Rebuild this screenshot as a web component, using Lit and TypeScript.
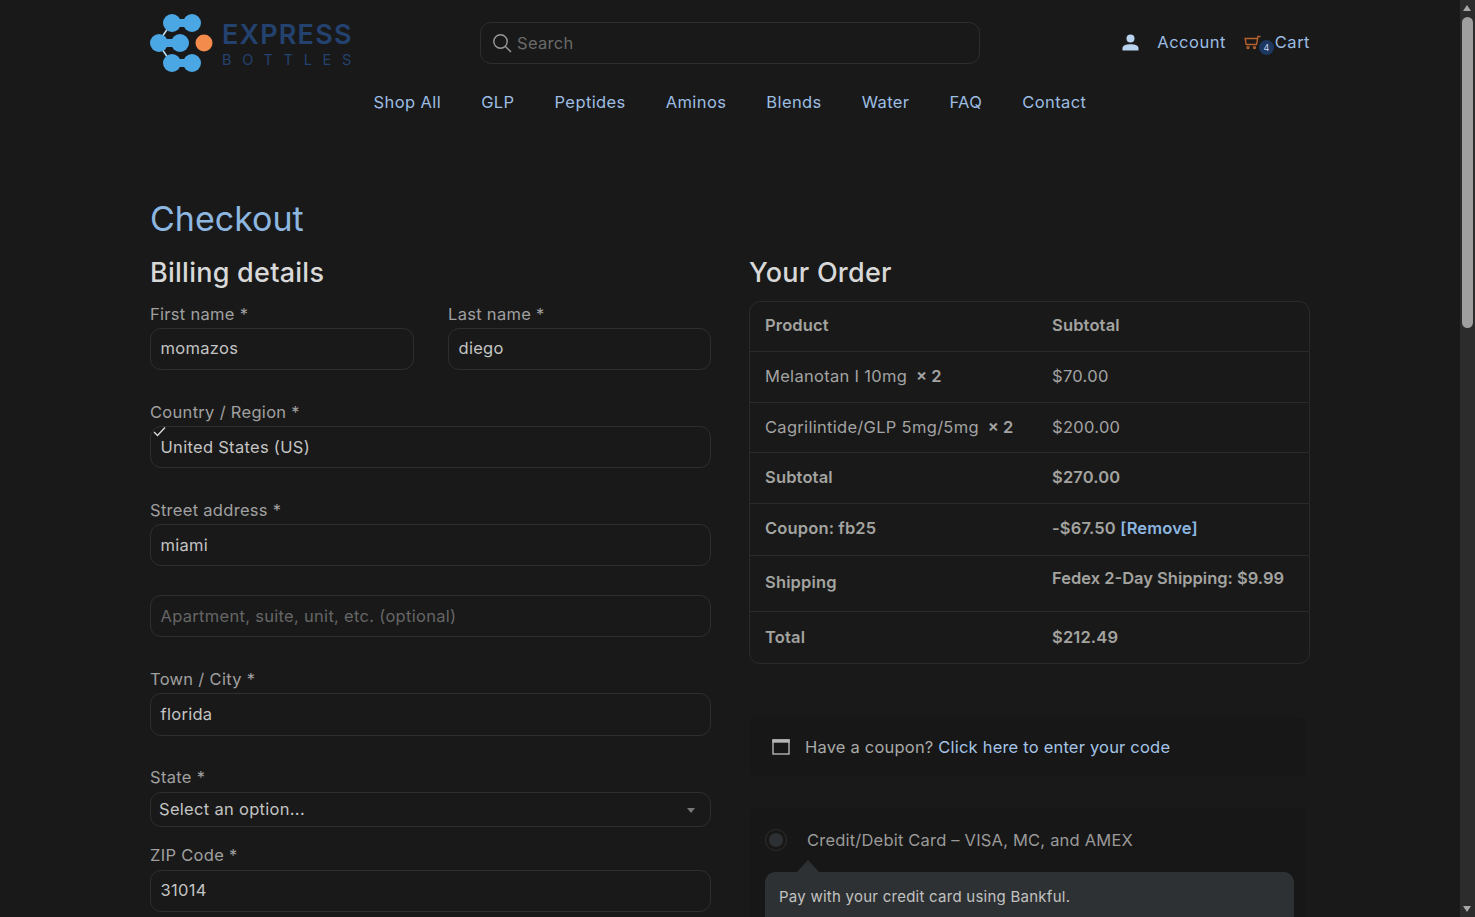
import { LitElement, html, css } from 'lit';
import { customElement } from 'lit/decorators.js';

const NAV = ['Shop All', 'GLP', 'Peptides', 'Aminos', 'Blends', 'Water', 'FAQ', 'Contact'];

const ROWS = [
  { label: 'Melanotan I 10mg', qty: '× 2', value: '$70.00', h: 51 },
  { label: 'Cagrilintide/GLP 5mg/5mg', qty: '× 2', value: '$200.00', h: 50 },
];

@customElement('app-root')
export class AppRoot extends LitElement {
  static styles = css`
    :host {
      display: block;
      height: 917px;
      overflow: hidden;
      position: relative;
      background: #191919;
      color: #a9a9a9;
      font-family: Inter, "Noto Sans", sans-serif;
      font-size: 16.5px;
      letter-spacing: 0.3px;
    }

    .page {
      width: 1160px;
      margin-left: 150px;
    }

    .top {
      display: flex;
      align-items: center;
      height: 85px;
    }

    .logo {
      display: flex;
      align-items: center;
      width: 330px;
      gap: 6px;
    }

    .logo-words {
      display: flex;
      flex-direction: column;
      color: #24426f;
      font-weight: 600;
    }

    .logo-main {
      font-size: 27px;
      line-height: 33px;
      letter-spacing: 1.2px;
    }

    .logo-sub {
      font-size: 14.5px;
      line-height: 17px;
      letter-spacing: 10.7px;
      font-weight: 400;
    }

    .search {
      display: flex;
      align-items: center;
      gap: 5px;
      box-sizing: border-box;
      width: 500px;
      height: 42px;
      padding-left: 11px;
      border: 1px solid #2e2e2e;
      border-radius: 11px;
      color: #6a6a6a;
      margin-top: 1px;
    }

    .actions {
      display: flex;
      align-items: center;
      margin-left: auto;
      margin-bottom: 1px;
      color: #9dbde2;
      letter-spacing: 0.5px;
    }

    .account {
      margin: 0 18px;
    }

    .cart-icon {
      position: relative;
      display: block;
      width: 31px;
      height: 24px;
      margin-top: 8px;
    }

    .badge {
      position: absolute;
      left: 15px;
      top: 6px;
      width: 15px;
      height: 15px;
      border-radius: 50%;
      background: #1d3760;
      color: #c8d8ee;
      font-size: 9px;
      line-height: 15px;
      text-align: center;
      letter-spacing: 0;
    }

    nav {
      display: flex;
      justify-content: center;
      gap: 40px;
      color: #9dbde2;
      line-height: 34px;
      letter-spacing: 0.4px;
    }

    h1 {
      margin: 79px 0 0;
      font-size: 34px;
      font-weight: 400;
      line-height: 42px;
      color: #8db6e0;
      letter-spacing: 0;
    }

    .columns {
      display: grid;
      grid-template-columns: 561px 561px;
      gap: 38px;
      margin-top: 17px;
    }

    h2 {
      margin: 0;
      font-size: 27px;
      font-weight: 500;
      line-height: 32px;
      color: #d8d8d8;
      letter-spacing: 0.25px;
    }

    .form {
      display: flex;
      flex-direction: column;
    }

    .pair {
      display: grid;
      grid-template-columns: 264px 263px;
      gap: 34px;
      margin-top: 18px;
    }

    .field {
      display: flex;
      flex-direction: column;
    }

    .spaced {
      margin-top: 35px;
    }

    .close {
      margin-top: 21px;
    }

    label {
      line-height: 14px;
      color: #a0a0a0;
    }

    .box {
      position: relative;
      display: flex;
      align-items: center;
      box-sizing: border-box;
      height: 42px;
      padding-left: 9.5px;
      margin-top: 7px;
      border: 1px solid #2e2e2e;
      border-radius: 11px;
      color: #c4c4c4;
    }

    .raised {
      padding-bottom: 2px;
    }

    .tall {
      height: 43px;
      padding-bottom: 1px;
    }

    .placeholder {
      color: #666;
      margin-top: 29px;
    }

    .check {
      position: absolute;
      left: 2px;
      top: -1px;
      width: 13px;
      height: 11px;
    }

    .select {
      height: 35px;
      padding-left: 8px;
      justify-content: space-between;
      padding-right: 15px;
      margin-top: 8px;
    }

    .zip {
      margin-top: 8px;
    }

    .caret {
      width: 0;
      height: 0;
      border-left: 4px solid transparent;
      border-right: 4px solid transparent;
      border-top: 5px solid #777;
      margin-top: 3px;
    }

    .order-table {
      margin-top: 12px;
      border: 1px solid #2a2a2a;
      border-radius: 11px;
    }

    .row {
      display: grid;
      grid-template-columns: 287px 1fr;
      align-items: center;
      box-sizing: border-box;
      padding: 0 0 2px 15px;
      border-bottom: 1px solid #2a2a2a;
      color: #a3a3a3;
    }

    .row.lift {
      padding-bottom: 4px;
    }

    .row:last-child {
      border-bottom: none;
    }

    .row.strong {
      font-weight: 600;
      color: #a3a3a0;
      letter-spacing: 0.15px;
    }

    .qty {
      font-weight: 600;
      margin-left: 4px;
      letter-spacing: 0;
    }

    .remove {
      color: #8db6e0;
    }

    .shipping {
      align-self: start;
      padding-top: 12px;
      letter-spacing: 0;
    }

    .notice {
      display: flex;
      align-items: center;
      gap: 15px;
      box-sizing: border-box;
      width: 557px;
      height: 60px;
      margin-top: 53px;
      padding-left: 23px;
      background: #171717;
      border-radius: 8px;
      letter-spacing: 0.2px;
    }

    .notice a {
      color: #a5c4e6;
    }

    .payment {
      box-sizing: border-box;
      width: 557px;
      height: 140px;
      margin-top: 30px;
      padding: 20px 16px 0;
      background: #171717;
      border-radius: 8px;
    }

    .method {
      display: flex;
      align-items: center;
      gap: 20px;
      height: 26px;
      color: #9a9a9a;
      letter-spacing: 0.2px;
    }

    .radio {
      display: flex;
      align-items: center;
      justify-content: center;
      box-sizing: border-box;
      width: 22px;
      height: 22px;
      border: 1px solid #2e2e2e;
      border-radius: 50%;
    }

    .radio i {
      width: 14px;
      height: 14px;
      border-radius: 50%;
      background: #2c3033;
    }

    .pay-box {
      position: relative;
      box-sizing: border-box;
      width: 529px;
      height: 60px;
      margin-top: 19px;
      padding: 15px 14px;
      background: #2d3133;
      border-radius: 10px;
      font-size: 15px;
      letter-spacing: 0.25px;
      color: #c2c2c2;
    }

    .pay-box::before {
      content: '';
      position: absolute;
      left: 32px;
      top: -12px;
      border-left: 11px solid transparent;
      border-right: 11px solid transparent;
      border-bottom: 12px solid #2d3133;
    }

    .scrollbar {
      position: absolute;
      top: 0;
      right: 0;
      width: 15px;
      height: 917px;
      background: #2c2c2c;
    }

    .thumb {
      position: absolute;
      left: 2px;
      top: 17px;
      width: 11px;
      height: 311px;
      border-radius: 6px;
      background: #9f9f9f;
    }

    .arrow {
      position: absolute;
      left: 3px;
      width: 0;
      height: 0;
      border-left: 4.5px solid transparent;
      border-right: 4.5px solid transparent;
    }

    .arrow.up {
      top: 5px;
      border-bottom: 6px solid #a8a8a8;
    }

    .arrow.down {
      bottom: 5px;
      border-top: 6px solid #a8a8a8;
    }
  `;

  private logoMark() {
    return html`<svg width="66" height="60" viewBox="0 0 66 60" aria-hidden="true">
      <g stroke="#4ba6e4" stroke-width="8" fill="#4ba6e4">
        <line x1="22" y1="10" x2="42" y2="10" />
        <line x1="8" y1="30" x2="30" y2="30" />
        <line x1="22" y1="50" x2="42" y2="50" />
      </g>
      <g stroke="#bfe2f7" stroke-width="1.5">
        <line x1="12" y1="24" x2="18" y2="15" />
        <line x1="12" y1="36" x2="18" y2="45" />
      </g>
      <g fill="#4ba6e4">
        <circle cx="22" cy="10" r="9" />
        <circle cx="42" cy="10" r="9" />
        <circle cx="9" cy="30" r="9" />
        <circle cx="30" cy="30" r="9" />
        <circle cx="22" cy="50" r="9" />
        <circle cx="42" cy="50" r="9" />
      </g>
      <circle cx="54" cy="30" r="8.5" fill="#f28b4b" />
    </svg>`;
  }

  private input(label: string, value: string) {
    return html`<div class="field">
      <label>${label} *</label>
      <div class="box raised">${value}</div>
    </div>`;
  }

  render() {
    return html`
      <div class="page">
        <header class="top">
          <div class="logo">
            ${this.logoMark()}
            <div class="logo-words">
              <span class="logo-main">EXPRESS</span>
              <span class="logo-sub">BOTTLES</span>
            </div>
          </div>
          <div class="search">
            <svg width="20" height="20" viewBox="0 0 20 20" fill="none" stroke="#9a9a9a" stroke-width="1.4">
              <circle cx="8.5" cy="8.5" r="6.7" />
              <line x1="13.4" y1="13.4" x2="19" y2="19" />
            </svg>
            Search
          </div>
          <div class="actions">
            <svg width="17" height="17" viewBox="0 0 17 17" fill="#b9d2ee">
              <circle cx="8.5" cy="4.6" r="4" />
              <path d="M0.5 16.5v-2.2c0-2.6 3.4-4 8-4s8 1.4 8 4v2.2z" />
            </svg>
            <span class="account">Account</span>
            <span class="cart-icon">
              <svg width="17" height="15" viewBox="0 0 17 15" fill="none" stroke="#b8622f" stroke-width="1.4">
                <path d="M16.5 1.5h-2.6l-1.3 8H2.2l-1-6h12" />
                <circle cx="4" cy="12.6" r="1" />
                <circle cx="10.5" cy="12.6" r="1" />
              </svg>
              <span class="badge">4</span>
            </span>
            <span>Cart</span>
          </div>
        </header>
        <nav>${NAV.map((item) => html`<span>${item}</span>`)}</nav>

        <h1>Checkout</h1>
        <div class="columns">
          <section class="form">
            <h2>Billing details</h2>
            <div class="pair">
              ${this.input('First name', 'momazos')}
              ${this.input('Last name', 'diego')}
            </div>
            <div class="field spaced">
              <label>Country / Region *</label>
              <div class="box">
                <svg class="check" viewBox="0 0 13 11" fill="none" stroke="#d8d8d8" stroke-width="1.4">
                  <path d="M1 6l3.5 3.5L12 1.5" />
                </svg>
                United States (US)
              </div>
            </div>
            <div class="field spaced">
              <label>Street address *</label>
              <div class="box">miami</div>
              <div class="box placeholder">Apartment, suite, unit, etc. (optional)</div>
            </div>
            <div class="field spaced">
              <label>Town / City *</label>
              <div class="box tall">florida</div>
            </div>
            <div class="field" style="margin-top:34px">
              <label>State *</label>
              <div class="box select raised">Select an option...<span class="caret"></span></div>
            </div>
            <div class="field close">
              <label>ZIP Code *</label>
              <div class="box zip raised">31014</div>
            </div>
          </section>

          <section>
            <h2>Your Order</h2>
            <div class="order-table">
              <div class="row strong lift" style="height:50px"><span>Product</span><span>Subtotal</span></div>
              ${ROWS.map(
                (r) => html`<div class="row" style="height:${r.h}px">
                  <span>${r.label} <span class="qty">${r.qty}</span></span><span>${r.value}</span>
                </div>`
              )}
              <div class="row strong" style="height:51px"><span>Subtotal</span><span>$270.00</span></div>
              <div class="row strong lift" style="height:52px">
                <span>Coupon: fb25</span><span>-$67.50 <span class="remove">[Remove]</span></span>
              </div>
              <div class="row strong lift" style="height:56px">
                <span>Shipping</span><span class="shipping">Fedex 2-Day Shipping: $9.99</span>
              </div>
              <div class="row strong" style="height:51px"><span>Total</span><span>$212.49</span></div>
            </div>

            <div class="notice">
              <svg width="18" height="16" viewBox="0 0 18 16" fill="none" stroke="#b5b5b5" stroke-width="1.4">
                <rect x="1" y="1" width="16" height="14" />
                <rect x="1" y="1" width="16" height="2" fill="#b5b5b5" />
              </svg>
              <span>Have a coupon? <a>Click here to enter your code</a></span>
            </div>

            <div class="payment">
              <div class="method">
                <span class="radio"><i></i></span>
                <span>Credit/Debit Card – VISA, MC, and AMEX</span>
              </div>
              <div class="pay-box">Pay with your credit card using Bankful.</div>
            </div>
          </section>
        </div>
      </div>
      <div class="scrollbar">
        <span class="arrow up"></span>
        <span class="thumb"></span>
        <span class="arrow down"></span>
      </div>
    `;
  }
}
